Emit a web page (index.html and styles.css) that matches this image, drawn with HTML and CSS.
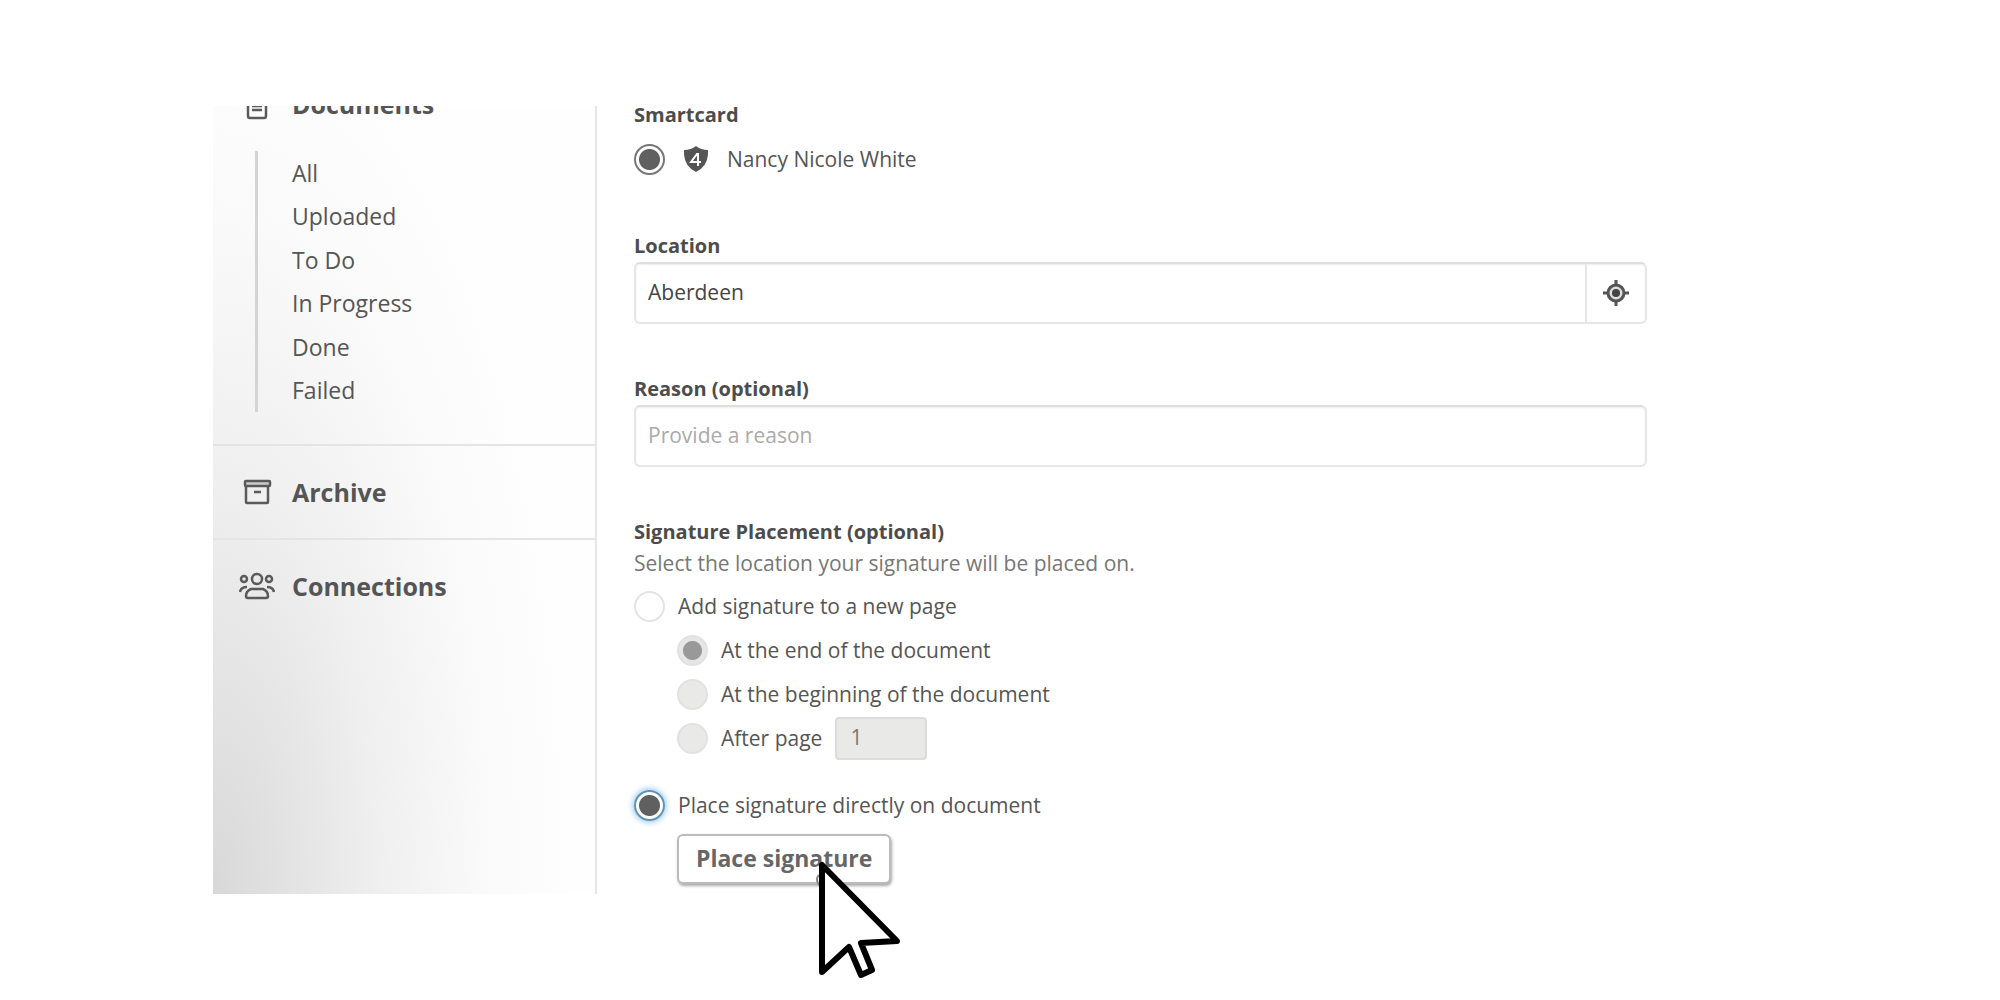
FILE: index.html
```html
<!DOCTYPE html>
<html lang="en">

<head>
    <meta charset="UTF-8">
    <meta name="viewport" content="width=device-width, initial-scale=1.0">
    <link rel="stylesheet" href="styles.css">

    <title>Sign Document</title>
</head>

<body>

    <div class="app">
        <nav class="sidebar">
            <div class="section">
                <a class="section-title documents" href="#">
                    <svg class="section-icon" viewBox="0 0 36 36" fill="none" stroke="#5a5a5a" stroke-width="2.5">
                        <rect x="9" y="7" width="18" height="25" rx="2" />
                        <path d="M13 15h10M13 20h10M13 24h10" />
                    </svg>
                    Documents
                </a>
                <ul class="sub-menu">
                    <li><a href="#">All</a></li>
                    <li><a href="#">Uploaded</a></li>
                    <li><a href="#">To Do</a></li>
                    <li><a href="#">In Progress</a></li>
                    <li><a href="#">Done</a></li>
                    <li><a href="#">Failed</a></li>
                </ul>
            </div>
            <div class="section">
                <a class="section-title" href="#">
                    <svg class="section-icon" viewBox="0 0 36 36" fill="none" stroke="#5a5a5a" stroke-width="2.5">
                        <rect x="6" y="7" width="25" height="5" rx="1" fill="#ccc" />
                        <path d="M7 12v16q0 1 1 1h20q1 0 1-1V12M15 18h7" />
                    </svg>
                    Archive
                </a>
            </div>
            <div class="section">
                <a class="section-title" href="#">
                    <svg class="section-icon" viewBox="0 0 36 36" fill="none" stroke="#5a5a5a" stroke-width="2.5">
                        <circle cx="18" cy="11" r="5" />
                        <circle cx="5" cy="11" r="3" />
                        <circle cx="30" cy="11" r="3" />
                        <path d="M12 21h12q5 2 5 7q0 2-2 2H9q-2 0-2-2q0-5 5-7z" />
                        <path d="M1 24q1-5 7-5M35 24q-1-5-7-5" />
                    </svg>
                    Connections
                </a>
            </div>
        </nav>

        <form class="main">
            <div class="field">
                <div class="label">Smartcard</div>
                <div class="radio-row card-row">
                    <input class="radio" type="radio" id="card" name="card" checked>
                    <label class="card-label" for="card">
                        <svg class="shield" viewBox="0 0 24 26">
                            <path d="M12 0q5 4 12 4q1 16-12 22q-13-6-12-22q7 0 12-4z" fill="#555" />
                            <path d="M14 20V8h-1l-6 8h10" fill="none" stroke="#fff" stroke-width="2" />
                        </svg>
                        Nancy Nicole White
                    </label>
                </div>
            </div>

            <div class="field">
                <label class="label" for="location">Location</label>
                <div class="input-group">
                    <input class="input" type="text" id="location" name="location" value="Aberdeen">
                    <button class="locate" type="button" aria-label="Use my location">
                        <svg width="26" height="26" viewBox="0 0 26 26" fill="none" stroke="#555">
                            <circle cx="13" cy="13" r="8" stroke-width="3" fill="#ddd" />
                            <circle cx="13" cy="13" r="4" fill="#444" stroke="none" />
                            <path d="M13 0v5M13 21v5M0 13h5M21 13h5" stroke-width="3" />
                        </svg>
                    </button>
                </div>
            </div>

            <div class="field">
                <label class="label" for="reason">Reason (optional)</label>
                <div class="input-group">
                    <input class="input" type="text" id="reason" name="reason" placeholder="Provide a reason">
                </div>
            </div>

            <div class="label">Signature Placement (optional)</div>
            <p class="hint">Select the location your signature will be placed on.</p>

            <div class="radio-row">
                <input class="radio" type="radio" id="newPage" name="placement">
                <label for="newPage">Add signature to a new page</label>
            </div>
            <div class="nested">
                <div class="radio-row">
                    <input class="radio" type="radio" id="atEnd" name="position" checked disabled>
                    <label for="atEnd">At the end of the document</label>
                </div>
                <div class="radio-row">
                    <input class="radio" type="radio" id="atStart" name="position" disabled>
                    <label for="atStart">At the beginning of the document</label>
                </div>
                <div class="radio-row">
                    <input class="radio" type="radio" id="afterPage" name="position" disabled>
                    <label for="afterPage">After page</label>
                    <input class="page-input" type="text" name="page" value="1" aria-label="Page number" disabled>
                </div>
            </div>

            <div class="radio-row direct">
                <input class="radio focused" type="radio" id="direct" name="placement" checked>
                <label for="direct">Place signature directly on document</label>
            </div>
            <div class="nested place">
                <button class="place-button" type="button">Place signature</button>
                <svg class="hand" width="26" height="18" viewBox="0 0 26 18" fill="#fff" stroke="#888" stroke-width="2">
                    <path d="M6 16q-6-6-3-11q3-2 5 1V2h4v4q9-3 10 2v8" />
                </svg>
                <svg class="cursor" width="88" height="124" viewBox="0 0 88 124">
                    <path d="M6 8V115L33 90L45 118L56 113L45 86L81 84z" fill="#fff" stroke="#000" stroke-width="6" stroke-linejoin="round" />
                </svg>
            </div>
        </form>
    </div>

</body>

</html>
```
FILE: styles.css
```css
* {
    box-sizing: border-box;
}

body {
    margin: 0;
    background-color: #fff;
    color: #555;
    font-family: "Open Sans", "Noto Sans", sans-serif;
    font-size: 21px;
}

a {
    color: inherit;
    text-decoration: none;
}

.app {
    display: flex;
    min-height: calc(100vh - 212px);
    margin: 106px 213px;
}

/* sidebar */
.sidebar {
    flex: 0 0 384px;
    overflow: hidden;
    border-right: 2px solid #e6e6e6;
    background: radial-gradient(ellipse 95% 115% at 0% 100%, #d8d8d8, #efefef 45%, #fafafa 75%, #fefefe);
}

.section + .section {
    border-top: 2px solid #e4e4e4;
}

.section-title {
    display: flex;
    align-items: center;
    gap: 17px;
    height: 92px;
    padding-left: 26px;
    font-size: 25px;
    font-weight: bold;
}

.documents {
    height: 36px;
    margin-top: -20px;
}

.section-icon {
    width: 36px;
    height: 36px;
}

.sub-menu {
    display: grid;
    grid-template-rows: repeat(6, 1fr);
    align-items: center;
    height: 261px;
    margin: 29px 0 32px 42px;
    padding: 0 0 0 34px;
    border-left: 3px solid #d4d4d4;
    list-style: none;
    font-size: 23px;
}

/* form */
.main {
    flex: 1;
    padding: 0 140px 0 37px;
}

.field {
    margin-bottom: 56px;
}

.label {
    display: block;
    line-height: 18px;
    font-size: 20px;
    font-weight: bold;
    color: #4c4c4c;
}

.input-group {
    display: flex;
    height: 62px;
    margin-top: 7px;
    border: 2px solid #e6e6e6;
    border-top-color: #dedede;
    border-radius: 6px;
    box-shadow: inset 0 1px 2px #eee;
}

.input {
    flex: 1;
    min-width: 0;
    padding: 0 12px 2px;
    border: none;
    background: none;
    color: #444;
    font: inherit;
}

.input::placeholder {
    color: #aaa;
}

.locate {
    display: flex;
    align-items: center;
    justify-content: center;
    width: 60px;
    border: none;
    border-left: 2px solid #e6e6e6;
    background: none;
}

.hint {
    margin: 10px 0 9px;
    line-height: 24px;
    color: #777;
}

.radio-row {
    display: flex;
    align-items: center;
    gap: 13px;
    height: 44px;
}

.card-row {
    margin-top: 13px;
    gap: 19px;
}

.card-label {
    display: flex;
    align-items: center;
    gap: 19px;
}

.shield {
    width: 24px;
    height: 26px;
}

.radio {
    appearance: none;
    width: 31px;
    height: 31px;
    margin: 0;
    border: 2px solid #e4e4e4;
    border-radius: 50%;
    background-color: #fff;
}

.radio:checked {
    border-color: #777;
    background: radial-gradient(circle, #606060 10px, #fff 11px);
}

.radio:disabled {
    border-color: #e2e2e2;
    background: #e9e9e8;
}

.radio:checked:disabled {
    background: radial-gradient(circle, #999 9px, #e6e6e6 10px);
}

.radio.focused {
    border-color: #5f93b8;
    box-shadow: 0 0 6px 1px #8fc4ea;
}

.nested {
    padding-left: 43px;
}

.page-input {
    width: 92px;
    height: 43px;
    padding: 0 13px 2px;
    border: 2px solid #dcdcdc;
    border-radius: 4px;
    background-color: #e9e9e8;
    color: #777;
    font: inherit;
}

.direct {
    margin-top: 23px;
}

.place {
    position: relative;
    margin-top: 7px;
}

.place-button {
    height: 50px;
    padding: 0 17px 2px;
    border: 2px solid #bbb;
    border-radius: 6px;
    background-color: #fff;
    box-shadow: 1px 2px 3px #aaa;
    color: #666;
    font: bold 23px "Open Sans", "Noto Sans", sans-serif;
}

.hand {
    position: absolute;
    top: 37px;
    left: 181px;
}

.cursor {
    position: absolute;
    top: 23px;
    left: 182px;
}
```
